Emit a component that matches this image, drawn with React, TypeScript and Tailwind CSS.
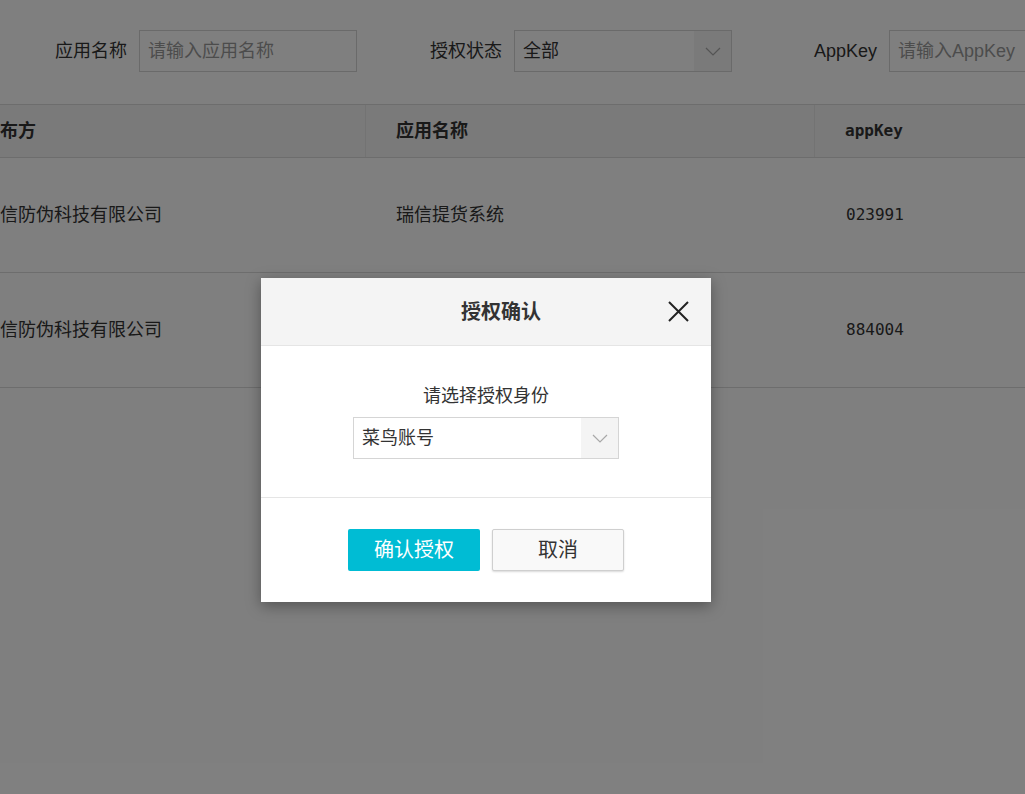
import React from 'react'

const font = { fontFamily: '"Liberation Sans", "Noto Sans CJK SC", sans-serif' }
const mono = { fontFamily: '"DejaVu Sans Mono", monospace' }

type Row = { publisher: string; app: string; key: string }

const rows: Row[] = [
  { publisher: '瑞信防伪科技有限公司', app: '瑞信提货系统', key: '023991' },
  { publisher: '瑞信防伪科技有限公司', app: '瑞信提货系统', key: '884004' },
]

function Chevron() {
  return (
    <svg width="16" height="9" viewBox="0 0 16 9">
      <path d="M1 1 L8 8 L15 1" fill="none" stroke="currentColor" strokeWidth="1.2" />
    </svg>
  )
}

function Field({ label, children }: { label: string; children: React.ReactNode }) {
  return (
    <div className="flex items-center gap-[12px]">
      <span className="w-[90px] text-right text-[18px] text-[#333] whitespace-nowrap">{label}</span>
      {children}
    </div>
  )
}

function SelectBox({ value, width }: { value: string; width: string }) {
  return (
    <div className={`flex h-[42px] ${width} border border-[#d5d5d5] bg-white`}>
      <span className="flex-1 pl-[8px] leading-[40px] text-[18px] text-[#333]">{value}</span>
      <span className="flex w-[37px] items-center justify-center bg-[#f4f4f4] text-[#a8a8a8]">
        <Chevron />
      </span>
    </div>
  )
}

export default function App() {
  return (
    <div className="relative h-[794px] w-[1025px] overflow-hidden bg-white" style={font}>
      {/* filters */}
      <div className="flex gap-[55px] pl-[37px] pt-[30px]">
        <Field label="应用名称">
          <div className="h-[42px] w-[218px] border border-[#d5d5d5] pl-[8px] leading-[40px] text-[18px] text-[#999]">
            请输入应用名称
          </div>
        </Field>
        <Field label="授权状态">
          <SelectBox value="全部" width="w-[218px]" />
        </Field>
        <Field label="AppKey">
          <div className="h-[42px] w-[218px] border border-[#d5d5d5] pl-[8px] leading-[40px] text-[18px] text-[#999] whitespace-nowrap">
            请输入AppKey
          </div>
        </Field>
      </div>

      {/* table, scrolled a little to the right */}
      <div className="ml-[-48px] mt-[32px] w-[1200px] border-t border-[#dadada]">
        <div className="flex h-[53px] items-center border-b border-[#dadada] bg-[#f4f4f4] text-[18px] font-bold text-[#333]">
          <div className="flex h-full w-[414px] items-center border-r border-[#e6e6e6] pl-[30px]">发布方</div>
          <div className="flex h-full w-[449px] items-center border-r border-[#e6e6e6] pl-[30px]">应用名称</div>
          <div className="flex h-full flex-1 items-center pl-[30px] text-[16px]" style={mono}>appKey</div>
        </div>
        {rows.map((r, i) => (
          <div key={i} className="flex h-[115px] items-center border-b border-[#dadada] text-[18px] text-[#333]">
            <div className="w-[414px] pl-[30px]">{r.publisher}</div>
            <div className="w-[450px] pl-[30px]">{r.app}</div>
            <div className="flex-1 pl-[30px] text-[16px]" style={mono}>{r.key}</div>
          </div>
        ))}
      </div>

      {/* modal */}
      <div className="absolute inset-0 bg-black/50 pl-[261px] pt-[278px]">
        <div className="w-[450px] bg-white shadow-[0_4px_14px_rgba(0,0,0,0.35)]">
          <div className="relative flex h-[68px] items-center justify-center border-b border-[#e5e5e5] bg-[#f4f4f4] pl-[30px]">
            <span className="text-[20px] font-bold text-[#333]">授权确认</span>
            <button className="absolute right-[21px] top-[22px] text-[#222]">
              <svg width="23" height="23" viewBox="0 0 23 23">
                <path d="M2 2 L21 21 M21 2 L2 21" stroke="currentColor" strokeWidth="2" />
              </svg>
            </button>
          </div>
          <div className="flex flex-col items-center border-b border-[#e5e5e5] pb-[38px] pt-[38px]">
            <span className="text-[18px] leading-[24px] text-[#333]">请选择授权身份</span>
            <div className="mt-[9px]">
              <SelectBox value="菜鸟账号" width="w-[266px]" />
            </div>
          </div>
          <div className="flex justify-center gap-[12px] pb-[31px] pt-[31px]">
            <button className="h-[42px] w-[132px] rounded-[2px] bg-[#00bcd4] text-[20px] text-white">确认授权</button>
            <button className="h-[42px] w-[132px] rounded-[2px] border border-[#cfcfcf] bg-[#f9f9f9] text-[20px] text-[#333] shadow-[0_1px_2px_rgba(0,0,0,0.15)]">取消</button>
          </div>
        </div>
      </div>
    </div>
  )
}
